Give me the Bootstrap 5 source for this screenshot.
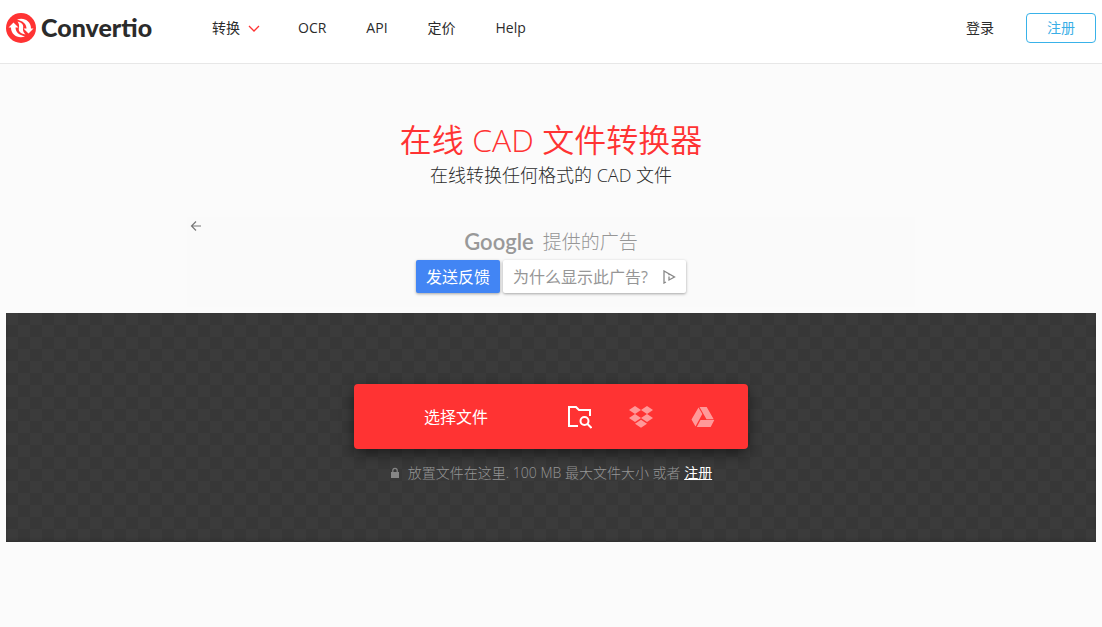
<!DOCTYPE html>
<html lang="zh">
<head>
<meta charset="utf-8">
<meta name="viewport" content="width=device-width, initial-scale=1">
<title>在线 CAD 文件转换器 — Convertio</title>
<link href="https://cdn.jsdelivr.net/npm/bootstrap@5.3.0/dist/css/bootstrap.min.css" rel="stylesheet">
<style>
body{font-family:"Open Sans","Noto Sans CJK SC",sans-serif;font-size:14px;line-height:20px;color:#2b2b2b;background:#fbfbfb}
.page-gutter{padding-left:6px;padding-right:6px}
.site-header{background:#fff;border-bottom:1px solid #e7e7e7;height:64px;padding-top:8px}
.site-header .bar{height:40px}
.site-header a{color:#2b2b2b;text-decoration:none}
.brand{gap:5px;width:206px;font:900 25px/30px Lato,sans-serif}
.brand span{padding-bottom:2px}
.main-links{gap:40px}
.main-links .has-menu{gap:8px;margin-right:-2px}
.btn-signup{--bs-btn-color:#39aee6;--bs-btn-border-color:#39b2e9;--bs-btn-hover-bg:#39b2e9;--bs-btn-hover-color:#fff;width:70px;height:30px;padding:0;font-size:14px;line-height:20px;border-radius:4px}
.hero{padding-top:56px;margin-bottom:28px}
.hero h1{font-size:32px;line-height:40px;font-weight:350;color:#f33;margin:0}
.hero p{font-size:18px;line-height:28px;font-weight:300;margin:1px 0 0}
.ad-box{max-width:728px;height:90px;background:#fafafa;color:#969696;padding-top:11px;font-weight:300}
.ad-back{top:3px;left:3px;padding:0;line-height:0;border:0}
.ad-by{gap:9px;font-size:19px;line-height:28px}
.ad-logo{font:600 22px/28px Lato,sans-serif;color:#999}
.ad-actions{gap:3px;margin-top:4px}
.ad-btn{height:33px;padding:0 10px;font-size:16px;line-height:32px;border:0;border-radius:2px;box-shadow:0 1px 3px rgba(0,0,0,.35)}
.ad-send{background:#4285f4;color:#fff}
.ad-why{background:#fff;color:#969696;gap:14px}
.drop-zone{margin-top:6px;min-height:229px;padding-top:71px;background:repeating-conic-gradient(#373737 0 25%,#3b3b3b 0 50%) 0 0/24px 24px;box-shadow:inset 0 -2px 3px rgba(0,0,0,.15)}
.picker{width:394px;max-width:100%;height:65px;background:#f33;border-radius:4px;box-shadow:0 5px 14px rgba(0,0,0,.5)}
.picker button{border:0;background:none;color:#fff;padding:0}
.picker .pick-file{width:194px;padding-left:10px;font-size:16px;line-height:24px;height:65px}
.pick-src{width:62px;height:65px;line-height:0}
.drop-note{margin-top:14px;color:#959595;font-weight:300;gap:8px;line-height:20px}
.drop-note a{color:#fff;font-weight:400}
</style>
</head>
<body>
<header class="site-header page-gutter">
  <nav class="bar d-flex align-items-center">
    <a class="brand d-flex align-items-center" href="#">
      <svg width="30" height="30" viewBox="0 0 30 30" aria-hidden="true"><circle cx="15" cy="15" r="15" fill="#f33"/><g fill="#fff"><path d="M11 6.500C18 4 25 8 25 15.500H27.500L22.500 20.500 17.500 15.500H20.500C20.500 11 17 8 11 6.500Z"/><path d="M19 23.500C12 26 5 22 5 14.500H2.500L7.500 9.500 12.500 14.500H9.500C9.500 19 13 22 19 23.500Z"/><path d="M11.500 8.500C16 9.500 18 12 17 15.500 16.700 17.500 17.500 19.500 19.500 21.500 14 20.500 12 18 13 14.500 13.300 12.500 13 10.500 11.500 8.500Z"/></g></svg>
      <span>Convertio</span>
    </a>
    <div class="main-links d-flex">
      <a class="has-menu d-flex align-items-center" href="#">转换 <svg width="12" height="12" viewBox="0 0 12 12" fill="none" stroke="#f33" stroke-width="1.300"><path d="m1 4 5 5 5-5"/></svg></a>
      <a href="#">OCR</a><a href="#">API</a><a href="#">定价</a><a href="#">Help</a>
    </div>
    <a class="ms-auto me-4 pe-2" href="#">登录</a>
    <button class="btn btn-signup" type="button">注册</button>
  </nav>
</header>
<main class="page-gutter">
  <section class="hero text-center">
    <h1>在线 CAD 文件转换器</h1>
    <p>在线转换任何格式的 CAD 文件</p>
  </section>
  <aside class="ad-box position-relative mx-auto">
    <button class="ad-back btn position-absolute" type="button" aria-label="返回"><svg width="12" height="12" viewBox="0 0 12 12" fill="none" stroke="#777" stroke-width="1.200"><path d="M11 6H1.500M6 1.500 1.500 6 6 10.500"/></svg></button>
    <div class="ad-by d-flex justify-content-center"><span class="ad-logo">Google</span><span>提供的广告</span></div>
    <div class="ad-actions d-flex justify-content-center">
      <button class="ad-btn ad-send" type="button">发送反馈</button>
      <button class="ad-btn ad-why d-flex align-items-center" type="button">为什么显示此广告? <svg width="14" height="14" viewBox="0 0 14 14" fill="none" stroke="#888" stroke-width="1.300"><path d="M4 12 2 13V1l10.500 6L7 10V6.500M7 4v1.200"/></svg></button>
    </div>
  </aside>
  <section class="drop-zone">
    <div class="picker d-flex mx-auto">
      <button class="pick-file" type="button">选择文件</button>
      <button class="pick-src" type="button" aria-label="本地文件"><svg width="26" height="26" viewBox="0 0 26 26" fill="none" stroke="#fff" stroke-width="2"><path d="M12 22H3V3h7l3 3h11v6"/><circle cx="18.500" cy="17" r="4"/><path d="m21.500 20 4 4"/></svg></button>
      <button class="pick-src" type="button" aria-label="Dropbox"><svg width="26" height="24" viewBox="0 0 26 24" fill="#fff" opacity=".5"><path d="m7 1 6 4-6 4-6-4zM19 1l6 4-6 4-6-4zM7 9l6 4-6 4-6-4zM19 9l6 4-6 4-6-4zM13 14.800l6 4-6 4-6-4z"/></svg></button>
      <button class="pick-src" type="button" aria-label="Google Drive"><svg width="24" height="22" viewBox="0 0 24 22" fill="#fff" opacity=".5"><path d="M7.500 1.500 11.300 8 4.500 20.500.5 13.500zM8.500 1h7.200l7 12.200h-7.200zM9.500 14h13.800l-3.600 7H5.800z"/></svg></button>
    </div>
    <div class="drop-note d-flex justify-content-center align-items-center"><svg width="10" height="12" viewBox="0 0 10 12" aria-hidden="true"><rect x="1" y="5" width="8" height="6" fill="#858585"/><path d="M2.800 5V3.500a2.200 2.200 0 0 1 4.400 0V5" fill="none" stroke="#858585" stroke-width="1.200"/></svg><span>放置文件在这里. 100 MB 最大文件大小 或者 <a href="#">注册</a></span></div>
  </section>
</main>
<script src="https://cdn.jsdelivr.net/npm/bootstrap@5.3.0/dist/js/bootstrap.bundle.min.js"></script>
</body>
</html>
